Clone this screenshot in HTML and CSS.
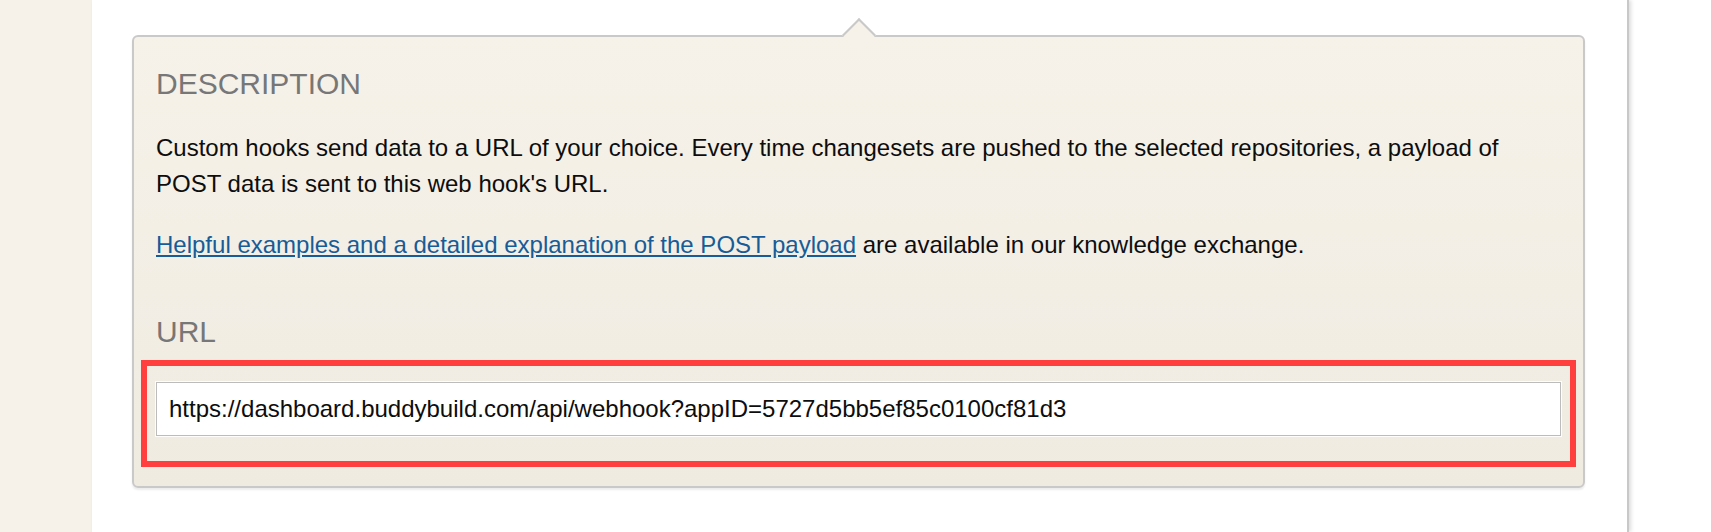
FILE: index.html
```html
<!DOCTYPE html>
<html>
<head>
<meta charset="utf-8">
<link rel="stylesheet" href="styles.css">
</head>
<body>
<div class="page">
  <aside class="sidebar"></aside>
  <main class="panel">
    <section class="card">
      <span class="card-arrow"></span>
      <h2 class="section-title">DESCRIPTION</h2>
      <p class="desc">Custom hooks send data to a URL of your choice. Every time changesets are pushed to the selected repositories, a payload of POST data is sent to this web hook's URL.</p>
      <p class="desc"><a class="link" href="#">Helpful examples and a detailed explanation of the POST payload</a> are available in our knowledge exchange.</p>
      <h2 class="section-title url-title">URL</h2>
      <div class="highlight">
        <input class="url-input" type="text" value="https://dashboard.buddybuild.com/api/webhook?appID=5727d5bb5ef85c0100cf81d3">
      </div>
    </section>
  </main>
  <div class="outside"></div>
</div>
</body>
</html>
```
FILE: styles.css
```css
html, body {
  margin: 0;
  padding: 0;
  height: 100%;
  background: #ffffff;
  font-family: "Liberation Sans", Arial, Helvetica, sans-serif;
}

.page {
  display: flex;
  height: 532px;
  overflow: hidden;
}

.sidebar {
  flex: 0 0 92px;
  background: #f6f2e9;
}

.panel {
  flex: 0 0 1537px;
  box-sizing: border-box;
  background: #ffffff;
  border-right: 2px solid #c8c8c8;
  box-shadow: 2px 0 4px rgba(0, 0, 0, 0.14);
  padding: 35px 42px 0 40px;
  position: relative;
  z-index: 1;
}

.outside {
  flex: 1 1 auto;
  background: #ffffff;
}

.card {
  position: relative;
  border: 2px solid #c9c9c9;
  border-radius: 6px;
  background: linear-gradient(to bottom, #f6f2e9 0%, #efebe1 100%);
  box-shadow: 0 2px 2px rgba(0, 0, 0, 0.08);
  padding: 29px 22px 19px 22px;
}

.card-arrow {
  position: absolute;
  top: -14px;
  left: 713px;
  width: 24px;
  height: 24px;
  box-sizing: border-box;
  background: #f6f2e9;
  border-top: 2px solid #c9c9c9;
  border-left: 2px solid #c9c9c9;
  transform: rotate(45deg);
}

.section-title {
  margin: 0;
  font-size: 30px;
  line-height: 36px;
  font-weight: normal;
  color: #777777;
}

.url-title {
  margin-top: 51px;
}

.desc {
  margin: 28px 0 0 0;
  font-size: 24px;
  line-height: 36px;
  color: #0d0d0d;
}

.desc + .desc {
  margin-top: 25px;
}

.link {
  color: #175c98;
  text-decoration: underline;
}

.highlight {
  margin: 10px -15px 0 -15px;
  border: 6px solid #fe3f3d;
  padding: 16px 9px 25px 9px;
}

.url-input {
  display: block;
  box-sizing: border-box;
  width: 100%;
  height: 54px;
  margin: 0;
  padding: 0 12px;
  border: 1px solid #bcbcbc;
  box-shadow: 0 0 0 1px rgba(255, 255, 255, 0.9);
  background: #ffffff;
  font-family: "Liberation Sans", Arial, Helvetica, sans-serif;
  font-size: 24px;
  color: #0d0d0d;
  outline: none;
}
```
